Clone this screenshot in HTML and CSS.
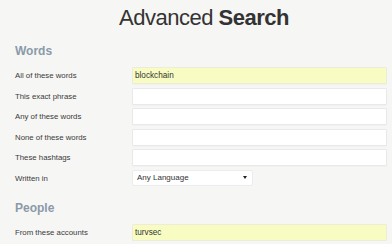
FILE: index.html
```html
<!DOCTYPE html>
<html lang="en">
<head>
    <meta charset="UTF-8">
    <meta name="viewport" content="width=device-width, initial-scale=1.0">
    <title>Advanced Search</title>
    <link rel="stylesheet" href="styles.css">
</head>
<body>
    <div class="search-page">
        <h1 class="page-title">Advanced <b>Search</b></h1>

        <form class="search-form">
            <!-- Words -->
            <h2 class="section-title">Words</h2>
            <div class="rows">
                <div class="row">
                    <label for="all-words">All of these words</label>
                    <input type="text" id="all-words" class="field filled" value="blockchain">
                </div>
                <div class="row">
                    <label for="exact-phrase">This exact phrase</label>
                    <input type="text" id="exact-phrase" class="field">
                </div>
                <div class="row">
                    <label for="any-words">Any of these words</label>
                    <input type="text" id="any-words" class="field">
                </div>
                <div class="row">
                    <label for="none-words">None of these words</label>
                    <input type="text" id="none-words" class="field">
                </div>
                <div class="row">
                    <label for="hashtags">These hashtags</label>
                    <input type="text" id="hashtags" class="field">
                </div>
                <div class="row">
                    <label for="lang">Written in</label>
                    <div class="select-wrap">
                        <select id="lang" class="select">
                            <option>Any Language</option>
                        </select>
                    </div>
                </div>
            </div>

            <!-- People -->
            <h2 class="section-title people">People</h2>
            <div class="rows">
                <div class="row">
                    <label for="from-accounts">From these accounts</label>
                    <input type="text" id="from-accounts" class="field filled" value="turvsec">
                </div>
            </div>
        </form>
    </div>
</body>
</html>
```

FILE: styles.css
```css
* {
    margin: 0;
    padding: 0;
    box-sizing: border-box;
}

body {
    font-family: 'Liberation Sans', Arial, sans-serif;
    background: #f6f6f5;
    color: #333;
}

.search-page {
    padding: 0 5px 0 15px;
}

.page-title {
    margin-top: 5px;
    padding-left: 6px;
    font-size: 22px;
    line-height: 26px;
    letter-spacing: -0.5px;
    font-weight: normal;
    text-align: center;
    color: #333;
}

.page-title b {
    font-weight: bold;
}

.section-title {
    margin: 13px 0 9px;
    font-size: 12px;
    line-height: 14px;
    font-weight: bold;
    color: #8a9aa8;
}

.section-title.people {
    margin-top: 14px;
}

.rows {
    display: flex;
    flex-direction: column;
    gap: 3.5px;
}

.row {
    display: grid;
    grid-template-columns: 117px 1fr;
    align-items: center;
    height: 17px;
}

.row label {
    font-size: 7.8px;
    color: #3a3a3a;
}

.field {
    width: 100%;
    height: 17px;
    padding: 0 2px;
    border: 1px solid #e9e9ec;
    border-radius: 1px;
    background: #fff;
    font-family: inherit;
    font-size: 8.2px;
    color: #333;
    box-shadow: 0 1px 0 rgba(0, 0, 0, 0.02);
}

.field.filled {
    background: #f9fcc2;
    border-color: #ececd8;
}

.field:focus {
    outline: none;
}

.select-wrap {
    position: relative;
    align-self: start;
    width: 121px;
    height: 16px;
}

.select {
    appearance: none;
    -webkit-appearance: none;
    display: block;
    width: 100%;
    height: 16px;
    padding: 0 0 0 4px;
    line-height: 14px;
    border: 1px solid #ececee;
    border-radius: 2px;
    background: #fff;
    font-family: inherit;
    font-size: 8px;
    color: #333;
}

/* small dropdown arrow */
.select-wrap::after {
    content: "";
    position: absolute;
    right: 6px;
    top: 6px;
    border-left: 2px solid transparent;
    border-right: 2px solid transparent;
    border-top: 3px solid #222;
    pointer-events: none;
}
```
